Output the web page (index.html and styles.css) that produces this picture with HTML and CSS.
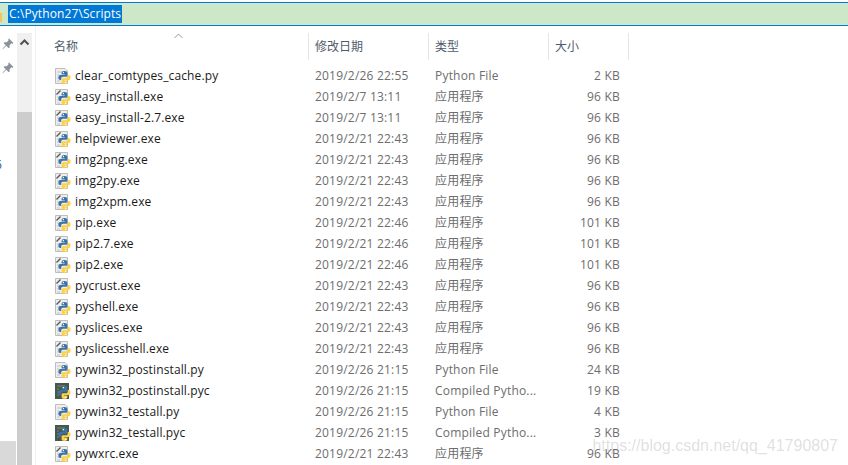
FILE: index.html
```html
<html>
  <head>
    <title>Scripts</title>
    <link rel="stylesheet" href="styles.css">
  </head>

  <body>
    <svg class="defs" width="0" height="0">
      <symbol id="snake" viewBox="0 0 16 16">
        <g transform="translate(1 0)">
          <path fill="#3c74a6" d="M8.6 3C6.4 3 5.6 3.8 5.6 5V6.4H8.8V7H4.2C3 7 2.400 8 2.400 9.500S3 12 4.200 12H5.200V10.600C5.200 9.500 6 8.800 7 8.800H10C10.800 8.800 11.400 8.200 11.400 7.400V5C11.400 3.800 10.400 3 8.600 3Z"/>
          <path fill="#fdd14a" d="M8.400 16C10.600 16 11.400 15.200 11.400 14V12.600H8.200V12H12.800C14 12 14.600 11 14.600 9.500S14 7 12.800 7H11.800V8.400C11.800 9.500 11 10.200 10 10.200H7C6.200 10.200 5.600 10.800 5.600 11.600V14C5.600 15.200 6.600 16 8.400 16Z"/>
          <rect fill="#fff" x="6.800" y="4" width="1.200" height="1.200"/>
          <rect fill="#fff" x="9" y="13.800" width="1.200" height="1.200"/>
        </g>
      </symbol>
      <symbol id="py" viewBox="0 0 16 16">
        <path fill="#eeeeee" stroke="#bdbdbd" d="M.5 .5H10L12.500 3V15.500H.5Z"/>
        <path stroke="#c4c4c4" d="M2 4H9M2 7H4M2 10H4M2 13H5"/>
        <use href="#snake"/>
      </symbol>
      <symbol id="exe" viewBox="0 0 16 16">
        <path fill="#eeeeee" stroke="#bdbdbd" d="M.5 .5H12.500V15.500H.5Z"/>
        <path stroke="#555" stroke-width="1.300" d="M1.500 5.500L5.500 1.500"/>
        <path stroke="#c4c4c4" d="M2 8H4M2 11H4M2 14H5"/>
        <use href="#snake"/>
      </symbol>
      <symbol id="pyc" viewBox="0 0 16 16">
        <rect fill="#46574c" x="0" y="0" width="14" height="16"/>
        <path stroke="#7c8a7f" d="M2 3H10M2 6H4M2 9H4M2 12H4"/>
        <use href="#snake"/>
      </symbol>
      <symbol id="pin" viewBox="0 0 12 12">
        <path fill="#8c9299" d="M7 .5L11.500 5L10.500 5.800L9.500 5.300L7.600 7.200L7.600 9.500L6.600 10.200L4.400 7.800L1 11L.6 10.600L3.800 7.200L1.600 5.200L2.400 4.200L4.700 4.200L6.600 2.300L6.200 1.300Z"/>
      </symbol>
    </svg>

    <div class="addressBar">
      <span class="folderEdge"></span>
      <span class="addressText">C:\Python27\Scripts</span>
    </div>

    <div class="explorer">
      <div class="quickAccess">
        <svg class="pin pin-1"><use href="#pin"/></svg>
        <svg class="pin pin-2"><use href="#pin"/></svg>
        <span class="cutLabel"><span>6</span></span>
        <div class="navButton"></div>
      </div>

      <div class="scrollbar">
        <svg class="scrollUp" width="15" height="10" viewBox="0 0 15 10"><path fill="none" stroke="#505050" stroke-width="2" d="M3.500 7.500L7.500 3.500L11.500 7.500"/></svg>
        <div class="scrollThumb"></div>
      </div>

      <div class="fileList">
        <div class="headerRow">
          <svg class="sortCaret" width="9" height="6" viewBox="0 0 9 6"><path fill="none" stroke="#9a9a9a" d="M.5 5L4.500 1L8.500 5"/></svg>
          <div class="headerCell nameHead">名称</div>
          <div class="headerCell dateHead">修改日期</div>
          <div class="headerCell typeHead">类型</div>
          <div class="headerCell sizeHead">大小</div>
        </div>

        <div class="row"><svg class="fileIcon"><use href="#py"/></svg><span class="name">clear_comtypes_cache.py</span><span class="cell">2019/2/26 22:55</span><span class="cell">Python File</span><span class="size">2 KB</span></div>
        <div class="row"><svg class="fileIcon"><use href="#exe"/></svg><span class="name">easy_install.exe</span><span class="cell">2019/2/7 13:11</span><span class="cell">应用程序</span><span class="size">96 KB</span></div>
        <div class="row"><svg class="fileIcon"><use href="#exe"/></svg><span class="name">easy_install-2.7.exe</span><span class="cell">2019/2/7 13:11</span><span class="cell">应用程序</span><span class="size">96 KB</span></div>
        <div class="row"><svg class="fileIcon"><use href="#exe"/></svg><span class="name">helpviewer.exe</span><span class="cell">2019/2/21 22:43</span><span class="cell">应用程序</span><span class="size">96 KB</span></div>
        <div class="row"><svg class="fileIcon"><use href="#exe"/></svg><span class="name">img2png.exe</span><span class="cell">2019/2/21 22:43</span><span class="cell">应用程序</span><span class="size">96 KB</span></div>
        <div class="row"><svg class="fileIcon"><use href="#exe"/></svg><span class="name">img2py.exe</span><span class="cell">2019/2/21 22:43</span><span class="cell">应用程序</span><span class="size">96 KB</span></div>
        <div class="row"><svg class="fileIcon"><use href="#exe"/></svg><span class="name">img2xpm.exe</span><span class="cell">2019/2/21 22:43</span><span class="cell">应用程序</span><span class="size">96 KB</span></div>
        <div class="row"><svg class="fileIcon"><use href="#exe"/></svg><span class="name">pip.exe</span><span class="cell">2019/2/21 22:46</span><span class="cell">应用程序</span><span class="size">101 KB</span></div>
        <div class="row"><svg class="fileIcon"><use href="#exe"/></svg><span class="name">pip2.7.exe</span><span class="cell">2019/2/21 22:46</span><span class="cell">应用程序</span><span class="size">101 KB</span></div>
        <div class="row"><svg class="fileIcon"><use href="#exe"/></svg><span class="name">pip2.exe</span><span class="cell">2019/2/21 22:46</span><span class="cell">应用程序</span><span class="size">101 KB</span></div>
        <div class="row"><svg class="fileIcon"><use href="#exe"/></svg><span class="name">pycrust.exe</span><span class="cell">2019/2/21 22:43</span><span class="cell">应用程序</span><span class="size">96 KB</span></div>
        <div class="row"><svg class="fileIcon"><use href="#exe"/></svg><span class="name">pyshell.exe</span><span class="cell">2019/2/21 22:43</span><span class="cell">应用程序</span><span class="size">96 KB</span></div>
        <div class="row"><svg class="fileIcon"><use href="#exe"/></svg><span class="name">pyslices.exe</span><span class="cell">2019/2/21 22:43</span><span class="cell">应用程序</span><span class="size">96 KB</span></div>
        <div class="row"><svg class="fileIcon"><use href="#exe"/></svg><span class="name">pyslicesshell.exe</span><span class="cell">2019/2/21 22:43</span><span class="cell">应用程序</span><span class="size">96 KB</span></div>
        <div class="row"><svg class="fileIcon"><use href="#py"/></svg><span class="name">pywin32_postinstall.py</span><span class="cell">2019/2/26 21:15</span><span class="cell">Python File</span><span class="size">24 KB</span></div>
        <div class="row"><svg class="fileIcon"><use href="#pyc"/></svg><span class="name">pywin32_postinstall.pyc</span><span class="cell">2019/2/26 21:15</span><span class="cell">Compiled Pytho...</span><span class="size">19 KB</span></div>
        <div class="row"><svg class="fileIcon"><use href="#py"/></svg><span class="name">pywin32_testall.py</span><span class="cell">2019/2/26 21:15</span><span class="cell">Python File</span><span class="size">4 KB</span></div>
        <div class="row"><svg class="fileIcon"><use href="#pyc"/></svg><span class="name">pywin32_testall.pyc</span><span class="cell">2019/2/26 21:15</span><span class="cell">Compiled Pytho...</span><span class="size">3 KB</span></div>
        <div class="row"><svg class="fileIcon"><use href="#exe"/></svg><span class="name">pywxrc.exe</span><span class="cell">2019/2/21 22:43</span><span class="cell">应用程序</span><span class="size">96 KB</span></div>
      </div>
    </div>

    <div class="watermark">https://blog.csdn.net/qq_41790807</div>
  </body>
</html>
```

FILE: styles.css
```css
body {
  margin: 0px;
  width: 848px;
  height: 465px;
  overflow: hidden;
  position: relative;
  background-color: #fff;
  font-family: "Open Sans", "Noto Sans CJK SC", sans-serif;
  font-size: 12px;
  color: #6d6d6d;
}

.defs {
  position: absolute;
}

.addressBar {
  display: flex;
  align-items: center;
  height: 20px;
  margin-top: 2px;
  padding: 1px 0px;
  padding-left: 8px;
  box-sizing: content-box;
  background-color: #cde8c9;
  border-top: 1px solid #0078d7;
  border-bottom: 1px solid #0078d7;
  position: relative;
}

.folderEdge {
  position: absolute;
  left: 0px;
  top: 10px;
  width: 2px;
  height: 9px;
  background-color: #f2c65c;
}

.addressText {
  background-color: #0078d7;
  color: #fff;
  height: 18px;
  line-height: 18px;
  font-size: 12px;
  letter-spacing: 0.1px;
  padding: 0px 1px;
}

.explorer {
  display: flex;
  height: 440px;
}

.quickAccess {
  width: 17px;
  flex: none;
  display: flex;
  flex-direction: column;
}

.pin {
  width: 12px;
  height: 12px;
  margin-left: 2px;
}

.pin-1 {
  margin-top: 12px;
}

.pin-2 {
  margin-top: 12px;
}

.cutLabel {
  width: 3px;
  height: 16px;
  margin-top: 83px;
  overflow: hidden;
  line-height: 16px;
  color: #1d4f85;
}

.cutLabel span {
  margin-left: -5px;
  display: block;
}

.navButton {
  width: 16px;
  height: 25px;
  margin-top: auto;
  background-color: #d9d9d9;
}

.scrollbar {
  width: 15px;
  flex: none;
  margin-top: 7px;
  background-color: #f0f0f0;
}

.scrollUp {
  display: block;
  margin-top: 4px;
}

.scrollThumb {
  height: 360px;
  margin-top: 65px;
  background-color: #cdcdcd;
}

.fileList {
  flex: 1;
  margin-left: 3px;
  border-left: 1px solid #f0f0f0;
}

.headerRow {
  display: flex;
  height: 27px;
  margin-top: 7px;
  margin-bottom: 5px;
  position: relative;
  color: #4f5b6b;
}

.sortCaret {
  position: absolute;
  left: 138px;
  top: 0px;
}

.headerCell {
  line-height: 27px;
  padding-left: 6px;
  box-sizing: border-box;
  border-right: 1px solid #e5e5e5;
}

.nameHead {
  width: 273px;
  padding-left: 18px;
}

.dateHead {
  width: 120px;
}

.typeHead {
  width: 120px;
}

.sizeHead {
  width: 80px;
}

.row {
  display: grid;
  grid-template-columns: 16px 244px 120px 120px 65px;
  align-items: center;
  height: 21px;
  padding-left: 19px;
  line-height: 21px;
  white-space: nowrap;
  letter-spacing: 0.2px;
}

.fileIcon {
  width: 16px;
  height: 16px;
}

.name {
  color: #1a1a1a;
  padding-left: 4px;
  letter-spacing: 0.12px;
}

.size {
  text-align: right;
}

.watermark {
  position: absolute;
  right: 10px;
  top: 437px;
  font-family: "Liberation Sans", sans-serif;
  font-size: 16px;
  color: rgba(120, 120, 120, 0.24);
  white-space: nowrap;
}
```
